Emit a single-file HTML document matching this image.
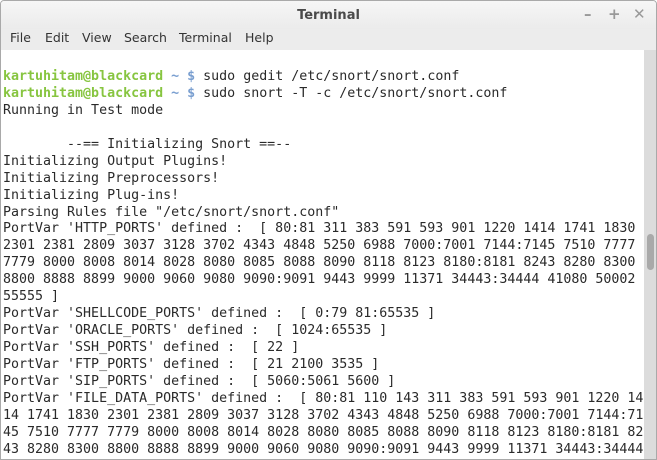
<!DOCTYPE html>
<html><head><style>
body{margin:0;width:657px;height:460px;overflow:hidden;background:#fff;font-family:"DejaVu Sans","Liberation Sans",sans-serif;}
.win{position:absolute;left:0;top:0;width:655px;height:458px;border:1px solid #a9a9a9;border-radius:4px 4px 0 0;overflow:hidden;background:#fff}
.title{position:absolute;left:0;top:0;width:100%;height:28px;background:linear-gradient(#f6f6f6,#ebebeb);text-align:center;font-weight:bold;font-size:13px;color:#4a4a4a;line-height:29px}
.ctl{position:absolute;top:4px;font-size:15px;color:#999;font-weight:bold}
.menu{position:absolute;left:0;top:28px;width:100%;height:21px;background:#ececec;font-size:12.5px;color:#333;line-height:18px}
.menu span{position:absolute;top:0}
.term{position:absolute;left:2px;top:68px;font-family:"DejaVu Sans Mono","Liberation Mono",monospace;font-size:13.3px;line-height:16.93px;color:#2a2a2a;white-space:pre;letter-spacing:0}
.g{color:#87c540;font-weight:bold}.b{color:#7a9fd0;font-weight:bold}
.sb{position:absolute;left:643px;top:49px;width:13px;height:410px;background:#dcdcdc}
.th{position:absolute;left:646px;top:233px;width:7px;height:36px;background:#a9a9a9;border-radius:4px}
</style></head><body><div class="win">
<div class="title">Terminal</div>
<span class="ctl" style="left:583px">–</span><span class="ctl" style="left:607px">+</span><span class="ctl" style="left:632px">✕</span>
<div class="menu"><span style="left:9px">File</span><span style="left:44px">Edit</span><span style="left:81px">View</span><span style="left:123px">Search</span><span style="left:178px">Terminal</span><span style="left:244px">Help</span></div>
<div class="sb"></div><div class="th"></div>
<div class="term"><span class="g">kartuhitam@blackcard</span> <span class="b">~ $</span> sudo gedit /etc/snort/snort.conf
<span class="g">kartuhitam@blackcard</span> <span class="b">~ $</span> sudo snort -T -c /etc/snort/snort.conf
Running in Test mode

        --== Initializing Snort ==--
Initializing Output Plugins!
Initializing Preprocessors!
Initializing Plug-ins!
Parsing Rules file "/etc/snort/snort.conf"
PortVar 'HTTP_PORTS' defined :  [ 80:81 311 383 591 593 901 1220 1414 1741 1830
2301 2381 2809 3037 3128 3702 4343 4848 5250 6988 7000:7001 7144:7145 7510 7777
7779 8000 8008 8014 8028 8080 8085 8088 8090 8118 8123 8180:8181 8243 8280 8300
8800 8888 8899 9000 9060 9080 9090:9091 9443 9999 11371 34443:34444 41080 50002
55555 ]
PortVar 'SHELLCODE_PORTS' defined :  [ 0:79 81:65535 ]
PortVar 'ORACLE_PORTS' defined :  [ 1024:65535 ]
PortVar 'SSH_PORTS' defined :  [ 22 ]
PortVar 'FTP_PORTS' defined :  [ 21 2100 3535 ]
PortVar 'SIP_PORTS' defined :  [ 5060:5061 5600 ]
PortVar 'FILE_DATA_PORTS' defined :  [ 80:81 110 143 311 383 591 593 901 1220 14
14 1741 1830 2301 2381 2809 3037 3128 3702 4343 4848 5250 6988 7000:7001 7144:71
45 7510 7777 7779 8000 8008 8014 8028 8080 8085 8088 8090 8118 8123 8180:8181 82
43 8280 8300 8800 8888 8899 9000 9060 9080 9090:9091 9443 9999 11371 34443:34444</div>
</div></body></html>
